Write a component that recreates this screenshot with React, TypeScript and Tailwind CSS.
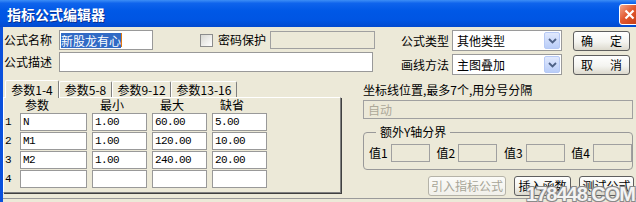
import React from 'react';

function Combo({ text }: { text: string }) {
  return (
    <div className="w-[110px] h-[21px] bg-white border border-[#9a9a9a] flex items-center">
      <span className="ml-[4px]">{text}</span>
      <div className="ml-auto mr-[1px] w-[16px] h-[17px] rounded-[2px] border border-[#b6c9f5] bg-[linear-gradient(to_bottom,#e1e9fd,#b9cdf8)] flex items-center justify-center">
        <svg width="9" height="6" viewBox="0 0 9 6">
          <path d="M1 1 L4.5 4.5 L8 1" stroke="#4d6185" strokeWidth="1.8" fill="none" />
        </svg>
      </div>
    </div>
  );
}

function Btn({ children, w, disabled }: { children: React.ReactNode; w: string; disabled?: boolean }) {
  return (
    <div
      className={
        'h-[20px] rounded-[3px] border flex items-center justify-center ' +
        w +
        (disabled
          ? ' border-[#b5b3a8] text-[#a7a597] bg-[linear-gradient(to_bottom,#fbfbf8,#f1f0ea)]'
          : ' border-[#5f5f5f] bg-[linear-gradient(to_bottom,#ffffff,#f4f4f0_55%,#dcd9cd)]')
      }
    >
      {children}
    </div>
  );
}

const rows = [
  ['N', '1.00', '60.00', '5.00'],
  ['M1', '1.00', '120.00', '10.00'],
  ['M2', '1.00', '240.00', '20.00'],
  ['', '', '', ''],
];

function Cell({ w, text }: { w: string; text: string }) {
  return (
    <div className={'h-[18px] bg-white border border-[#999] flex items-center pl-[2px] font-["Liberation_Mono",monospace] text-[11px] tracking-[-0.6px] ' + w}>
      {text}
    </div>
  );
}

export default function App() {
  return (
    <div className="relative w-[636px] h-[202px] overflow-hidden bg-[#ece9d8] font-['Noto_Sans_CJK_SC',sans-serif] text-[12px] leading-[14px] text-black">
      {/* title bar */}
      <div className="h-[27px] flex items-start bg-[linear-gradient(to_bottom,#3d8ef6_0%,#0f64ec_12%,#0058e6_40%,#0055e3_75%,#024acf_100%)]">
        <span className="ml-[7px] mt-[6px] text-[14px] leading-[16px] font-bold text-white [text-shadow:1px_1px_0_#0b2f8f]">
          指标公式编辑器
        </span>
        <div className="ml-auto mt-[4px] -mr-[4px] w-[21px] h-[21px] rounded-[3px] border border-white bg-[linear-gradient(135deg,#f3a88e,#e2582f_45%,#c43a12)] flex items-center justify-center">
          <svg width="11" height="11" viewBox="0 0 11 11">
            <path d="M1.5 1.5 L9.5 9.5 M9.5 1.5 L1.5 9.5" stroke="white" strokeWidth="2.2" />
          </svg>
        </div>
      </div>

      <div className="flex h-[175px] border-l-[3px] border-[#0a50dc]">
        <div className="flex-1 flex flex-col">
          {/* top section */}
          <div className="mt-[3px] h-[46px] flex items-start">
            <div className="ml-[1px] w-[371px] flex flex-col gap-[2px]">
              <div className="h-[20px] flex items-center">
                <span className="w-[55px]">公式名称</span>
                <div className="w-[94px] h-[20px] bg-white border border-[#999] flex items-center pl-[1px]">
                  <span className="bg-[#316ac5] text-white leading-[15px]">新股龙有心</span>
                  <span className="w-[1px] h-[14px] bg-[#e07a10]" />
                </div>
                <div className="ml-[47px] w-[13px] h-[13px] border border-[#8c8d8d] bg-[linear-gradient(135deg,#d9d9d3,#ffffff)]" />
                <span className="ml-[5px]">密码保护</span>
                <div className="ml-auto w-[105px] h-[18px] border border-[#a0a0a0] bg-[#ece9d8]" />
              </div>
              <div className="h-[20px] flex items-center">
                <span className="w-[55px]">公式描述</span>
                <div className="w-[314px] h-[20px] bg-white border border-[#999]" />
              </div>
            </div>

            <div className="ml-[26px] flex flex-col gap-[3px]">
              <div className="flex items-center">
                <span className="w-[48px]">公式类型</span>
                <div className="ml-[3px]">
                  <Combo text="其他类型" />
                </div>
              </div>
              <div className="flex items-center">
                <span className="w-[48px]">画线方法</span>
                <div className="ml-[3px]">
                  <Combo text="主图叠加" />
                </div>
              </div>
            </div>

            <div className="ml-[11px] mt-[1px] flex flex-col gap-[4px]">
              <Btn w="w-[57px]">
                <span className="flex gap-[17px]"><span>确</span><span>定</span></span>
              </Btn>
              <Btn w="w-[57px]">
                <span className="flex gap-[17px]"><span>取</span><span>消</span></span>
              </Btn>
            </div>
          </div>

          {/* middle section */}
          <div className="mt-[4px] h-[116px] flex items-start">
            {/* tab control */}
            <div className="w-[338px] flex flex-col">
              <div className="h-[17px] flex items-end pl-[2px] relative z-10">
                <div className="h-[18px] w-[54px] -mb-[1px] bg-[#ece9d8] border-t border-l border-white border-r border-r-[#808080] rounded-t-[2px] flex items-center justify-center">
                  参数1-4
                </div>
                <div className="h-[16px] w-[53px] border-t border-l border-white border-r border-r-[#808080] rounded-t-[2px] flex items-center justify-center">
                  参数5-8
                </div>
                <div className="h-[16px] w-[59px] border-t border-l border-white border-r border-r-[#808080] rounded-t-[2px] flex items-center justify-center">
                  参数9-12
                </div>
                <div className="h-[16px] w-[66px] border-t border-l border-white border-r border-r-[#808080] rounded-t-[2px] flex items-center justify-center">
                  参数13-16
                </div>
              </div>
              <div className="h-[96px] border border-white border-r-[#808080] border-b-[#808080] shadow-[1px_1px_0_#404040] flex flex-col">
                <div className="h-[15px] flex items-end pb-[1px]">
                  <span className="w-[16px]" />
                  <span className="w-[67px] pl-[5px]">参数</span>
                  <span className="ml-[5px] w-[55px] pl-[8px]">最小</span>
                  <span className="ml-[5px] w-[55px] pl-[8px]">最大</span>
                  <span className="ml-[5px] w-[55px] pl-[8px]">缺省</span>
                </div>
                <div className="flex flex-col gap-[1px]">
                  {rows.map((r, i) => (
                    <div key={i} className="flex items-center">
                      <span className="w-[16px] pl-[1px] font-['Liberation_Mono',monospace] text-[11px]">{i + 1}</span>
                      <Cell w="w-[67px]" text={r[0]} />
                      <div className="ml-[5px]"><Cell w="w-[55px]" text={r[1]} /></div>
                      <div className="ml-[5px]"><Cell w="w-[55px]" text={r[2]} /></div>
                      <div className="ml-[5px]"><Cell w="w-[55px]" text={r[3]} /></div>
                    </div>
                  ))}
                </div>
              </div>
            </div>

            {/* right panel */}
            <div className="ml-[22px] w-[270px] flex flex-col">
              <span className="mt-[3px]">坐标线位置,最多7个,用分号分隔</span>
              <div className="mt-[3px] h-[19px] border border-[#a0a0a0] bg-[#ece9d8] flex items-center pl-[4px] text-[#aca899]">
                自动
              </div>
              <fieldset className="mt-[6px] h-[45px] border border-[#999] rounded-[4px] px-[5px]">
                <legend className="ml-[7px] px-[4px] leading-[14px]">额外Y轴分界</legend>
                <div className="mt-[5px] flex items-center justify-between pr-0 -mr-[5px]">
                  {['值1', '值2', '值3', '值4'].map((t) => (
                    <div key={t} className="flex items-center">
                      <span>{t}</span>
                      <div className="ml-[3px] w-[39px] h-[18px] border border-[#a0a0a0] bg-[#ece9d8]" />
                    </div>
                  ))}
                </div>
              </fieldset>
              <div className="mt-[6px] flex justify-end gap-[8px] -mr-[1px]">
                <Btn w="w-[78px]" disabled>引入指标公式</Btn>
                <Btn w="w-[57px]">插入函数</Btn>
                <Btn w="w-[55px]">测试公式</Btn>
              </div>
            </div>
          </div>

          <div className="mt-[2px] flex-1 border-t border-[#9a9a9a]" />
        </div>
      </div>

      {/* watermark */}
      <div className="absolute right-[1px] top-[184px] font-['Liberation_Sans',sans-serif] text-[20px] leading-none font-bold tracking-[-1px] text-white/90 [text-shadow:1px_1px_0_#8a8a8a,-1px_-1px_0_#8a8a8a,1px_-1px_0_#8a8a8a,-1px_1px_0_#8a8a8a]">
        178448.COM
      </div>
    </div>
  );
}
